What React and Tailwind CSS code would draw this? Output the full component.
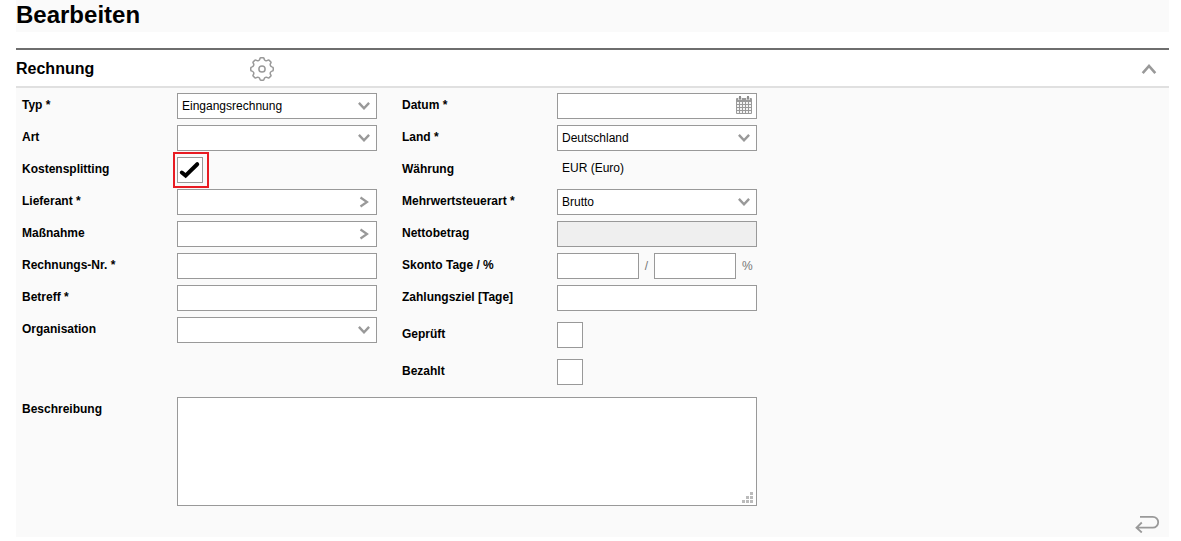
import { useState } from "react";

const BOX = "block h-[26px] w-full min-w-0 border border-[#999999] bg-white px-1 text-[12px] leading-6 text-black outline-none";

function Field({ id, label, children }) {
  return (
    <div className="flex items-start">
      <label htmlFor={id} className="w-[155px] shrink-0 text-[12px] leading-6 font-bold text-black">
        {label}
      </label>
      <div className="relative min-w-0 flex-1">{children}</div>
    </div>
  );
}

function SelectField({ id, label, options }) {
  return (
    <Field id={id} label={label}>
      <select id={id} className={`${BOX} appearance-none pr-6`}>
        {options.map((o) => (
          <option key={o}>{o}</option>
        ))}
      </select>
      <svg
        viewBox="0 0 12 8"
        fill="none"
        stroke="#999999"
        strokeWidth="2.4"
        className="pointer-events-none absolute top-[9px] right-[7px] h-2 w-3"
        aria-hidden="true"
      >
        <path d="M.9.900 6 6.300 11.100.900" />
      </svg>
    </Field>
  );
}

function TextField({ id, label, ...props }) {
  return (
    <Field id={id} label={label}>
      <input id={id} type="text" className={`${BOX} disabled:bg-[#efefef]`} {...props} />
    </Field>
  );
}

function LookupField({ id, label }) {
  return (
    <Field id={id} label={label}>
      <input id={id} type="text" className={`${BOX} pr-6`} />
      <button type="button" aria-label={`${label} suchen`} className="absolute top-0 right-0 flex h-[26px] w-[26px] items-center justify-center">
        <svg viewBox="0 0 10 12" fill="none" stroke="#999999" strokeWidth="2.2" className="h-3 w-[10px]">
          <path d="M1.500 1.500 8 6 1.500 10.500" />
        </svg>
      </button>
    </Field>
  );
}

function CheckField({ id, label, initial = false, marked = false }) {
  const [checked, setChecked] = useState(initial);
  return (
    <Field id={id} label={label}>
      <div className="relative size-[26px]">
        <input
          id={id}
          type="checkbox"
          checked={checked}
          onChange={(e) => setChecked(e.target.checked)}
          className="block size-[26px] appearance-none border border-[#999999] bg-white"
        />
        {checked && (
          <svg viewBox="0 0 26 26" className="pointer-events-none absolute inset-0 size-[26px]" aria-hidden="true">
            <path d="M4.800 15.500 8.600 18.600 20.200 7.200" fill="none" stroke="#000" strokeWidth="4" strokeLinejoin="miter" strokeLinecap="round" />
          </svg>
        )}
        {marked && <span className="pointer-events-none absolute -top-[5px] -left-1 size-9 border-2 border-[#e81c23]" />}
      </div>
    </Field>
  );
}

function CalendarIcon() {
  return (
    <svg viewBox="0 0 16 18" className="h-[18px] w-4" aria-hidden="true">
      <path d="M1 2h14a1 1 0 0 1 1 1v14a1 1 0 0 1-1 1H1a1 1 0 0 1-1-1V3a1 1 0 0 1 1-1Z" fill="#999999" />
      <path d="M2 1.500h4v2.500H2ZM10 1.500h4v2.500h-4Z" fill="#dddddd" />
      <path d="M3 0h2v3.500H3ZM11 0h2v3.500h-2Z" fill="#8c8c8c" />
      <g fill="#f4f4f4">
        {[6, 9, 12, 15].map((y) =>
          [1, 4, 7, 10, 13].map((x) => <rect key={`${x}-${y}`} x={x} y={y} width="2" height="2" />)
        )}
      </g>
    </svg>
  );
}

const gearPoint = (radius, degrees) => {
  const a = ((degrees - 90) * Math.PI) / 180;
  return `${(12 + radius * Math.cos(a)).toFixed(2)} ${(12 + radius * Math.sin(a)).toFixed(2)}`;
};

// Eight rounded teeth joined by concave notches.
const GEAR_PATH =
  [0, 45, 90, 135, 180, 225, 270, 315]
    .map(
      (a) =>
        `${a === 0 ? "M" : "L"}${gearPoint(10.2, a - 12)}Q${gearPoint(11.3, a - 11)} ${gearPoint(11.3, a - 6)}` +
        `L${gearPoint(11.3, a + 6)}Q${gearPoint(11.3, a + 11)} ${gearPoint(10.2, a + 12)}` +
        `A2.3 2.3 0 0 0 ${gearPoint(10.2, a + 33)}`
    )
    .join("") + "Z";

function GearIcon() {
  return (
    <svg viewBox="0 0 24 24" fill="none" stroke="#999999" strokeWidth="1.5" strokeLinejoin="round" className="size-6" aria-hidden="true">
      <path d={GEAR_PATH} />
      <circle cx="12" cy="12" r="3.1" />
    </svg>
  );
}

export default function App() {
  return (
    <main className="pr-3 pb-1 pl-4 font-['Liberation_Sans',Arial,sans-serif] text-black">
      <h1 className="h-8 bg-[#fafafa] text-[24px] leading-[30px] font-bold">Bearbeiten</h1>

      <section className="mt-4 border-t-2 border-[#6e6e6e]">
        <header className="flex h-[38px] items-center border-b-2 border-[#e0e0e0] bg-white pt-px">
          <h2 className="w-[234px] text-[16px] leading-6 font-bold">Rechnung</h2>
          <button type="button" aria-label="Einstellungen">
            <GearIcon />
          </button>
          <button type="button" aria-label="Einklappen" className="mr-3 ml-auto">
            <svg viewBox="0 0 16 12" fill="none" stroke="#999999" strokeWidth="2.6" className="h-3 w-4">
              <path d="M1.700 10.200 8 3l6.300 7.200" />
            </svg>
          </button>
        </header>

        <form className="bg-[#fafafa] pt-[5px] pb-1 pl-[6px]" onSubmit={(e) => e.preventDefault()}>
          <div className="grid max-w-[735px] grid-cols-2 gap-x-[25px]">
            <div className="flex flex-col gap-[6px]">
              <SelectField id="typ" label="Typ *" options={["Eingangsrechnung"]} />
              <SelectField id="art" label="Art" options={[""]} />
              <CheckField id="kostensplitting" label="Kostensplitting" initial marked />
              <LookupField id="lieferant" label="Lieferant *" />
              <LookupField id="massnahme" label="Maßnahme" />
              <TextField id="rechnungsnr" label="Rechnungs-Nr. *" />
              <TextField id="betreff" label="Betreff *" />
              <SelectField id="organisation" label="Organisation" options={[""]} />
            </div>

            <div>
              <div className="flex flex-col gap-[6px]">
                <Field id="datum" label="Datum *">
                  <input id="datum" type="text" className={`${BOX} pr-6`} />
                  <button type="button" aria-label="Datum wählen" className="absolute top-[3px] right-[5px]">
                    <CalendarIcon />
                  </button>
                </Field>
                <SelectField id="land" label="Land *" options={["Deutschland"]} />
                <Field id="waehrung" label="Währung">
                  <output id="waehrung" className="block h-[26px] px-[5px] text-[12px] leading-[22px]">
                    EUR (Euro)
                  </output>
                </Field>
                <SelectField id="mwst" label="Mehrwertsteuerart *" options={["Brutto", "Netto"]} />
                <TextField id="netto" label="Nettobetrag" disabled />
                <Field id="skonto" label="Skonto Tage / %">
                  <div className="flex items-center text-[12px] leading-6 text-[#777777]">
                    <input id="skonto" type="text" className={BOX} />
                    <span className="w-[15px] shrink-0 text-center">/</span>
                    <input type="text" aria-label="Skonto Prozent" className={BOX} />
                    <span className="w-[21px] shrink-0 pl-[6px]">%</span>
                  </div>
                </Field>
                <TextField id="zahlungsziel" label="Zahlungsziel [Tage]" />
              </div>
              <div className="mt-[11px] flex flex-col gap-[11px]">
                <CheckField id="geprueft" label="Geprüft" />
                <CheckField id="bezahlt" label="Bezahlt" />
              </div>
            </div>
          </div>

          <div className="mt-3 max-w-[735px]">
            <Field id="beschreibung" label="Beschreibung">
              <textarea id="beschreibung" className="block h-[109px] w-full resize-none border border-[#999999] bg-white p-1 text-[12px] outline-none" />
              <svg viewBox="0 0 11 11" fill="#bbbbbb" className="pointer-events-none absolute right-1 bottom-[3px] size-[11px]" aria-hidden="true">
                <path d="M8 0h3v3H8ZM4 4h3v3H4ZM8 4h3v3H8ZM0 8h3v3H0ZM4 8h3v3H4ZM8 8h3v3H8Z" />
              </svg>
            </Field>
          </div>

          <div className="mt-[9px] flex justify-end pr-[9px]">
            <button type="button" aria-label="Zurück">
              <svg viewBox="0 0 25 18" fill="none" stroke="#999999" strokeWidth="1.8" className="h-[18px] w-[25px]">
                <path d="M5 1.900H17.800a5.400 5.400 0 0 1 0 10.800H2M6.800 7.500 1.500 12.700 6.800 17.500" />
              </svg>
            </button>
          </div>
        </form>
      </section>
    </main>
  );
}
